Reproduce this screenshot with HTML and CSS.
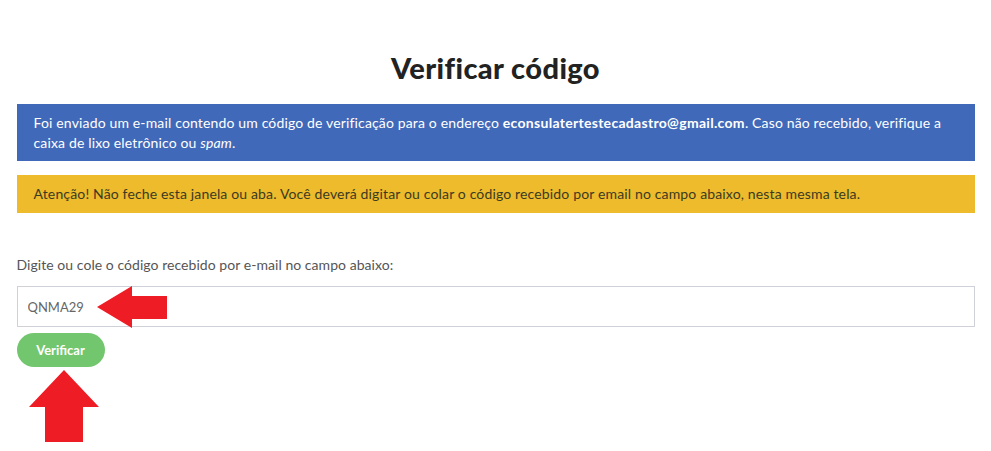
FILE: index.html
```html
<!DOCTYPE html>
<html lang="pt-BR">
<head>
    <meta charset="UTF-8">
    <meta name="viewport" content="width=device-width, initial-scale=1.0">
    <title>Verificar código</title>
    <link rel="stylesheet" href="styles.css">
</head>
<body>

<!-- Verificação de código -->
<div class="verify-container">
    <h1>Verificar código</h1>

    <div class="alert alert-info">
        Foi enviado um e-mail contendo um código de verificação para o endereço <strong>econsulatertestecadastro@gmail.com</strong>. Caso não recebido, verifique a caixa de lixo eletrônico ou <em>spam</em>.
    </div>

    <div class="alert alert-warning">
        Atenção! Não feche esta janela ou aba. Você deverá digitar ou colar o código recebido por email no campo abaixo, nesta mesma tela.
    </div>

    <form class="verify-form" onsubmit="return false;">
        <label for="codigo">Digite ou cole o código recebido por e-mail no campo abaixo:</label>
        <div class="field">
            <input type="text" id="codigo" value="QNMA29">
            <!-- seta apontando para o campo -->
            <svg class="arrow-left" width="70" height="42" viewBox="0 0 70 42">
                <polygon points="0,21 35,0 35,10 70,10 70,33 35,33 35,42" fill="#ee1c24"/>
            </svg>
        </div>
        <div class="actions">
            <button class="verify-btn">Verificar</button>
            <!-- seta apontando para o botão -->
            <svg class="arrow-up" width="70" height="72" viewBox="0 0 70 72">
                <polygon points="35,0 70,37 54,37 54,72 16,72 16,37 0,37" fill="#ee1c24"/>
            </svg>
        </div>
    </form>
</div>

</body>
</html>
```

FILE: styles.css
```css
/* Global */
* {
    margin: 0;
    padding: 0;
    box-sizing: border-box;
}

body {
    font-family: 'Lato', 'Open Sans', sans-serif;
    background-color: #fff;
    color: #555;
}

/* Container */
.verify-container {
    max-width: 958px;
    margin: 0 auto;
    padding-top: 48px;
}

.verify-container h1 {
    font-size: 29px;
    font-weight: 900;
    letter-spacing: 0.4px;
    color: #222;
    text-align: center;
    line-height: 40px;
    margin-bottom: 16px;
}

/* Alerts */
.alert {
    font-size: 14px;
    line-height: 20px;
    letter-spacing: 0.15px;
    padding: 9px 17px 8px;
}

.alert-info {
    background-color: #4169b9;
    color: #fff;
}

.alert-info strong {
    font-weight: 700;
    letter-spacing: 0.3px;
}

.alert-warning {
    background-color: #edbb2b;
    color: #3b3a22;
    margin-top: 14px;
    padding-bottom: 9px;
}

/* Form */
.verify-form {
    margin-top: 42px;
}

.verify-form label {
    display: block;
    font-size: 14px;
    line-height: 20px;
    letter-spacing: 0.05px;
    color: #555;
    margin-bottom: 11px;
}

.field {
    position: relative;
}

.field input {
    display: block;
    width: 100%;
    height: 41px;
    border: 1px solid #cfd0d8;
    padding: 0 10px;
    font-family: inherit;
    font-size: 13px;
    color: #666;
    outline: none;
}

.arrow-left {
    position: absolute;
    left: 80px;
    top: 0;
}

.actions {
    margin-top: 6px;
    display: flex;
    flex-direction: column;
    align-items: flex-start;
}

.verify-btn {
    background-color: #72c66e;
    color: #fff;
    border: none;
    border-radius: 17px;
    width: 88px;
    height: 34px;
    font-family: inherit;
    font-size: 13px;
    font-weight: 700;
    cursor: pointer;
}

.verify-btn:hover {
    background-color: #62b55e;
}

.arrow-up {
    display: block;
    margin: 3px 0 0 12px;
}
```
